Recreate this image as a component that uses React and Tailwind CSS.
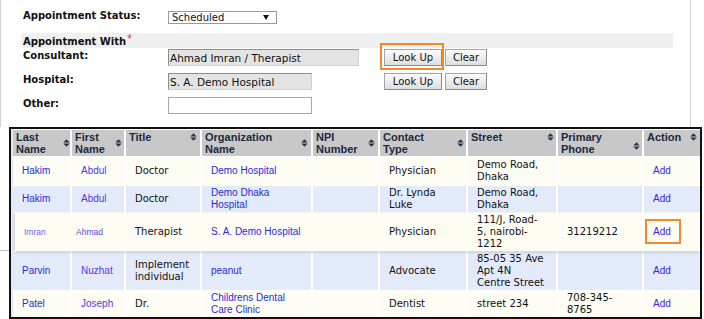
import React from "react";

const DV = "font-['DejaVu_Sans',Verdana,sans-serif]";
const LS = "font-['Liberation_Sans',Arial,sans-serif]";
const COLS = "grid grid-cols-[57px_52px_74px_109px_65px_86px_88px_84px_56px] gap-x-[2px]";

function SortIcon() {
  return (
    <svg width="7" height="8" viewBox="0 0 7 8" className="block shrink-0">
      <polygon points="0.3,3.5 3.5,0.2 6.7,3.5" fill="#26364c" />
      <polygon points="0.3,4.5 6.7,4.5 3.5,7.8" fill="#26364c" />
    </svg>
  );
}

function H({ children, iconCls }) {
  return (
    <div className="flex justify-between bg-[#c8c8c8] pl-[3px] pr-[2px] pt-px">
      <div className={`${LS} text-[11px] font-bold leading-[12px] text-[#1c2a3d]`}>{children}</div>
      <div className={iconCls}>
        <SortIcon />
      </div>
    </div>
  );
}

function T({ children, bg, cls = "" }) {
  return (
    <div className={`flex items-center pl-[9px] ${bg} ${DV} text-[10px] leading-[12px] text-[#111] ${cls}`}>
      {children}
    </div>
  );
}

function L({ children, bg, color = "text-[#2a2ad6]", cls = "" }) {
  return (
    <div className={`flex items-center pl-[9px] ${bg} ${LS} text-[10px] leading-[12px] ${color} ${cls}`}>
      <span>{children}</span>
    </div>
  );
}

const BLUE = "text-[#2a2ad6]";
const PURPLE = "text-[#5a36e4]";
const ADD = "text-[#3b24e2]";

function Btn({ children, w }) {
  return (
    <div
      className={`flex h-[17px] ${w} items-center justify-center border border-[#a5a5a5] border-b-[#8c8c8c] border-r-[#8c8c8c] bg-gradient-to-b from-[#fbfbfb] to-[#dedede] ${DV} text-[10px] leading-[12px] text-[#141414]`}
    >
      {children}
    </div>
  );
}

export default function App() {
  const cream = "bg-[#fdfdf4]";
  const blue = "bg-[#e3ebfa]";
  return (
    <div className="h-[319px] w-[704px] overflow-hidden bg-white">
      {/* top form */}
      <div className={`h-[127px] w-[691px] border-x border-[#d2d2d2] ${DV}`}>
        <div className="flex h-[33px]">
          <div className="ml-[22px] mt-[10px] w-[145px] text-[10px] font-bold leading-[12px] text-[#111]">
            Appointment Status:
          </div>
          <div className="mt-[11px] flex h-[13px] w-[109px] items-center justify-between border border-[#9a9a9a] bg-white pl-[3px] pr-[7px] text-[10px] leading-[10px] text-[#111]">
            <span>Scheduled</span>
            <svg width="6" height="5" viewBox="0 0 6 5" className="block">
              <polygon points="0,0 6,0 3,5" fill="#111" />
            </svg>
          </div>
        </div>
        <div className="ml-[20px] h-[15px] w-[652px] bg-[#f0f0f0] pl-[2px] pt-[2px] text-[10px] font-bold leading-[12px] text-[#111]">
          Appointment With
          <span className={`relative -top-[2px] ml-px ${LS} text-[12px] font-normal text-[#ee2a55]`}>*</span>
        </div>
        <div className="flex h-[25px]">
          <div className="ml-[22px] mt-[2px] w-[145px] text-[10px] font-bold leading-[12px] text-[#111]">
            Consultant:
          </div>
          <div className="w-[216px]">
            <div className="mt-px flex h-[17px] w-[191px] items-center border border-[#d0d0d0] border-l-[#8e8e8e] border-t-[#8e8e8e] bg-[#e4e4e4] pl-[1px] text-[10.5px] leading-[12px] text-[#111]">
              Ahmad Imran / Therapist
            </div>
          </div>
          <div className="mt-px flex">
            <div className="relative">
              <Btn w="w-[58px]">Look Up</Btn>
              <div className="absolute -left-[4px] -top-[6px] h-[27px] w-[64px] border-2 border-[#f08a24]" />
            </div>
            <div className="ml-[3px]">
              <Btn w="w-[42px]">Clear</Btn>
            </div>
          </div>
        </div>
        <div className="flex h-[24px]">
          <div className="ml-[22px] mt-px w-[145px] text-[10px] font-bold leading-[12px] text-[#111]">
            Hospital:
          </div>
          <div className="w-[216px]">
            <div className="flex h-[17px] w-[144px] items-center border border-[#d0d0d0] border-l-[#8e8e8e] border-t-[#8e8e8e] bg-[#e4e4e4] pl-[1px] text-[10.5px] leading-[12px] text-[#111]">
              S. A. Demo Hospital
            </div>
          </div>
          <div className="flex">
            <Btn w="w-[58px]">Look Up</Btn>
            <div className="ml-[3px]">
              <Btn w="w-[42px]">Clear</Btn>
            </div>
          </div>
        </div>
        <div className="flex">
          <div className="ml-[22px] mt-px w-[145px] text-[10px] font-bold leading-[12px] text-[#111]">
            Other:
          </div>
          <div className="h-[17px] w-[144px] border border-[#a9a9a9] bg-white" />
        </div>
      </div>

      {/* table area */}
      <div className="flex">
        <div className="w-[9px]">
          <div className="mt-[123px] h-px bg-[#b9c0c8]" />
        </div>
        <div className="h-[192px] w-[693px] border-2 border-[#111] bg-white pt-px">
          <div className="flex flex-col gap-y-px border-l-2 border-[#e2e9f5] bg-white">
            {/* header */}
            <div className={`${COLS} h-[26px] bg-white`}>
              <H iconCls="mt-[8px] -mr-[2px]">Last<br />Name</H>
              <H iconCls="mt-[8px]">First<br />Name</H>
              <H iconCls="mt-[2px] mr-px">Title</H>
              <H iconCls="mt-[8px] mr-px">Organization<br />Name</H>
              <H iconCls="mt-[8px] mr-px">NPI<br />Number</H>
              <H iconCls="mt-[8px]">Contact<br />Type</H>
              <H iconCls="mt-[2px]">Street</H>
              <H iconCls="mt-[11px]">Primary<br />Phone</H>
              <H iconCls="mt-[2px] mr-px">Action</H>
            </div>

            {/* row 1 */}
            <div className={`${COLS} h-[28px] bg-white`}>
              <L bg={cream} color={BLUE}>Hakim</L>
              <L bg={cream} color={PURPLE}>Abdul</L>
              <T bg={cream}>Doctor</T>
              <L bg={cream} color={BLUE}>Demo Hospital</L>
              <T bg={cream}></T>
              <T bg={cream}>Physician</T>
              <T bg={cream}>Demo Road,<br />Dhaka</T>
              <T bg={cream}></T>
              <L bg={cream} color={ADD}>Add</L>
            </div>

            {/* row 2 */}
            <div className={`${COLS} h-[26px] bg-white`}>
              <L bg={blue} color={BLUE}>Hakim</L>
              <L bg={blue} color={PURPLE}>Abdul</L>
              <T bg={blue}>Doctor</T>
              <L bg={blue} color={BLUE}>Demo Dhaka<br />Hospital</L>
              <T bg={blue}></T>
              <T bg={blue}>Dr. Lynda<br />Luke</T>
              <T bg={blue}>Demo Road,<br />Dhaka</T>
              <T bg={blue}></T>
              <L bg={blue} color={ADD}>Add</L>
            </div>

            {/* row 3 (raised) */}
            <div className="bg-[#e2e9f5]">
              <div className="relative z-10 ml-[2px] h-[38px] bg-[#fdfdf4] shadow-[0_1px_3px_rgba(0,0,0,0.22)]">
                <div className="grid h-full grid-cols-[55px_52px_74px_109px_65px_86px_88px_84px_56px] gap-x-[2px]">
                  <div className={`flex items-center pl-[9px] ${LS} text-[8.5px] leading-[10px] text-[#7463ee]`}>Imran</div>
                  <div className={`flex items-center pl-[4px] ${LS} text-[8.5px] leading-[10px] text-[#6048ec]`}>Ahmad</div>
                  <T bg="">Therapist</T>
                  <L bg="" color={BLUE}>S. A. Demo Hospital</L>
                  <T bg=""></T>
                  <T bg="">Physician</T>
                  <T bg="">111/J, Road-<br />5, nairobi-<br />1212</T>
                  <T bg="">31219212</T>
                  <div className={`flex items-center pl-[9px] ${LS} text-[10px] leading-[12px] ${ADD}`}>
                    <span className="relative">
                      Add
                      <span className="absolute -left-[8px] -top-[7px] h-[25px] w-[36px] border-2 border-[#f08a24]" />
                    </span>
                  </div>
                </div>
              </div>
            </div>

            {/* row 4 */}
            <div className={`${COLS} h-[38px] bg-white`}>
              <L bg={blue} color={BLUE}>Parvin</L>
              <L bg={blue} color={PURPLE}>Nuzhat</L>
              <T bg={blue}>Implement<br />individual</T>
              <L bg={blue} color={BLUE}>peanut</L>
              <T bg={blue}></T>
              <T bg={blue}>Advocate</T>
              <T bg={blue}>85-05 35 Ave<br />Apt 4N<br />Centre Street</T>
              <T bg={blue}></T>
              <L bg={blue} color={ADD}>Add</L>
            </div>

            {/* row 5 */}
            <div className={`${COLS} h-[26px] bg-white`}>
              <L bg={cream} color={BLUE}>Patel</L>
              <L bg={cream} color={PURPLE}>Joseph</L>
              <T bg={cream}>Dr.</T>
              <L bg={cream} color={BLUE}>Childrens Dental<br />Care Clinic</L>
              <T bg={cream}></T>
              <T bg={cream}>Dentist</T>
              <T bg={cream}>street 234</T>
              <T bg={cream}>708-345-<br />8765</T>
              <L bg={cream} color={ADD}>Add</L>
            </div>
          </div>
        </div>
      </div>
    </div>
  );
}
